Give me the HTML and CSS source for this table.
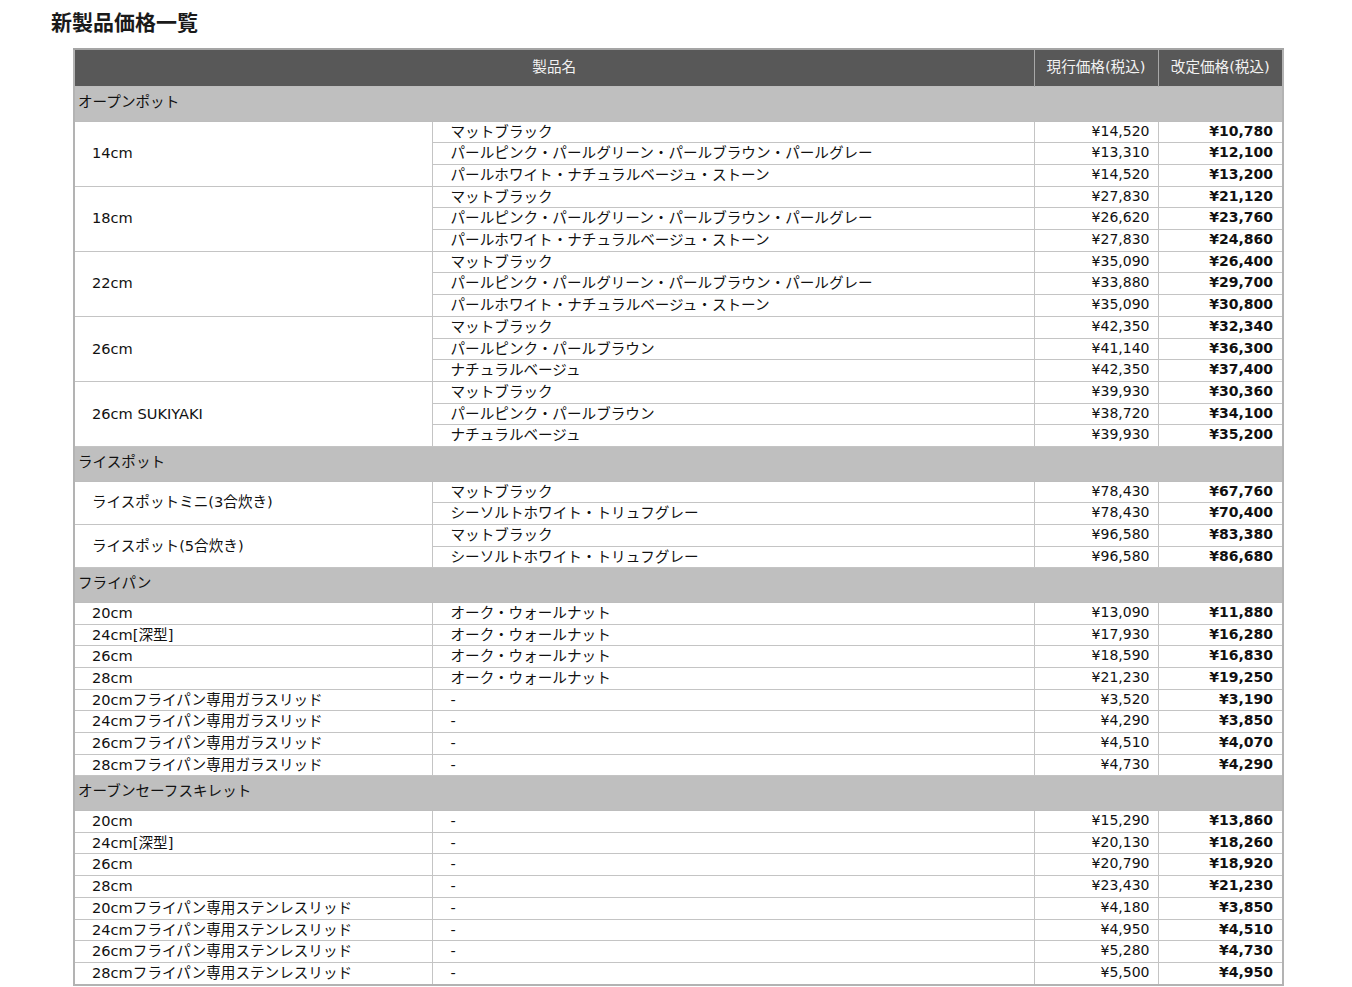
FILE: index.html
```html
<!DOCTYPE html>
<html lang="ja">
<head>
<meta charset="utf-8">
<title>新製品価格一覧</title>
<link rel="stylesheet" href="styles.css">
</head>
<body>
<div class="page">
<h1 class="title">新製品価格一覧</h1>
<table class="price-table">
<colgroup><col class="c-name"><col class="c-var"><col class="c-cur"><col class="c-new"></colgroup>
<thead>
<tr class="head"><th colspan="2">製品名</th><th>現行価格(税込)</th><th>改定価格(税込)</th></tr>
</thead>
<tbody>
<tr class="cat"><td colspan="4">オープンポット</td></tr>
<tr class="first"><td class="name" rowspan="3">14cm</td><td class="var">マットブラック</td><td class="cur">¥14,520</td><td class="new">¥10,780</td></tr>
<tr class="sub"><td class="var">パールピンク・パールグリーン・パールブラウン・パールグレー</td><td class="cur">¥13,310</td><td class="new">¥12,100</td></tr>
<tr class="sub"><td class="var">パールホワイト・ナチュラルベージュ・ストーン</td><td class="cur">¥14,520</td><td class="new">¥13,200</td></tr>
<tr class="first"><td class="name" rowspan="3">18cm</td><td class="var">マットブラック</td><td class="cur">¥27,830</td><td class="new">¥21,120</td></tr>
<tr class="sub"><td class="var">パールピンク・パールグリーン・パールブラウン・パールグレー</td><td class="cur">¥26,620</td><td class="new">¥23,760</td></tr>
<tr class="sub"><td class="var">パールホワイト・ナチュラルベージュ・ストーン</td><td class="cur">¥27,830</td><td class="new">¥24,860</td></tr>
<tr class="first"><td class="name" rowspan="3">22cm</td><td class="var">マットブラック</td><td class="cur">¥35,090</td><td class="new">¥26,400</td></tr>
<tr class="sub"><td class="var">パールピンク・パールグリーン・パールブラウン・パールグレー</td><td class="cur">¥33,880</td><td class="new">¥29,700</td></tr>
<tr class="sub"><td class="var">パールホワイト・ナチュラルベージュ・ストーン</td><td class="cur">¥35,090</td><td class="new">¥30,800</td></tr>
<tr class="first"><td class="name" rowspan="3">26cm</td><td class="var">マットブラック</td><td class="cur">¥42,350</td><td class="new">¥32,340</td></tr>
<tr class="sub"><td class="var">パールピンク・パールブラウン</td><td class="cur">¥41,140</td><td class="new">¥36,300</td></tr>
<tr class="sub"><td class="var">ナチュラルベージュ</td><td class="cur">¥42,350</td><td class="new">¥37,400</td></tr>
<tr class="first"><td class="name" rowspan="3">26cm SUKIYAKI</td><td class="var">マットブラック</td><td class="cur">¥39,930</td><td class="new">¥30,360</td></tr>
<tr class="sub"><td class="var">パールピンク・パールブラウン</td><td class="cur">¥38,720</td><td class="new">¥34,100</td></tr>
<tr class="sub"><td class="var">ナチュラルベージュ</td><td class="cur">¥39,930</td><td class="new">¥35,200</td></tr>

<tr class="cat"><td colspan="4">ライスポット</td></tr>
<tr class="first"><td class="name" rowspan="2">ライスポットミニ(3合炊き)</td><td class="var">マットブラック</td><td class="cur">¥78,430</td><td class="new">¥67,760</td></tr>
<tr class="sub"><td class="var">シーソルトホワイト・トリュフグレー</td><td class="cur">¥78,430</td><td class="new">¥70,400</td></tr>
<tr class="first"><td class="name" rowspan="2">ライスポット(5合炊き)</td><td class="var">マットブラック</td><td class="cur">¥96,580</td><td class="new">¥83,380</td></tr>
<tr class="sub"><td class="var">シーソルトホワイト・トリュフグレー</td><td class="cur">¥96,580</td><td class="new">¥86,680</td></tr>

<tr class="cat"><td colspan="4">フライパン</td></tr>
<tr class="row"><td class="name">20cm</td><td class="var">オーク・ウォールナット</td><td class="cur">¥13,090</td><td class="new">¥11,880</td></tr>
<tr class="row"><td class="name">24cm[深型]</td><td class="var">オーク・ウォールナット</td><td class="cur">¥17,930</td><td class="new">¥16,280</td></tr>
<tr class="row"><td class="name">26cm</td><td class="var">オーク・ウォールナット</td><td class="cur">¥18,590</td><td class="new">¥16,830</td></tr>
<tr class="row"><td class="name">28cm</td><td class="var">オーク・ウォールナット</td><td class="cur">¥21,230</td><td class="new">¥19,250</td></tr>
<tr class="row"><td class="name">20cmフライパン専用ガラスリッド</td><td class="var">-</td><td class="cur">¥3,520</td><td class="new">¥3,190</td></tr>
<tr class="row"><td class="name">24cmフライパン専用ガラスリッド</td><td class="var">-</td><td class="cur">¥4,290</td><td class="new">¥3,850</td></tr>
<tr class="row"><td class="name">26cmフライパン専用ガラスリッド</td><td class="var">-</td><td class="cur">¥4,510</td><td class="new">¥4,070</td></tr>
<tr class="row"><td class="name">28cmフライパン専用ガラスリッド</td><td class="var">-</td><td class="cur">¥4,730</td><td class="new">¥4,290</td></tr>

<tr class="cat"><td colspan="4">オーブンセーフスキレット</td></tr>
<tr class="row"><td class="name">20cm</td><td class="var">-</td><td class="cur">¥15,290</td><td class="new">¥13,860</td></tr>
<tr class="row"><td class="name">24cm[深型]</td><td class="var">-</td><td class="cur">¥20,130</td><td class="new">¥18,260</td></tr>
<tr class="row"><td class="name">26cm</td><td class="var">-</td><td class="cur">¥20,790</td><td class="new">¥18,920</td></tr>
<tr class="row"><td class="name">28cm</td><td class="var">-</td><td class="cur">¥23,430</td><td class="new">¥21,230</td></tr>
<tr class="row"><td class="name">20cmフライパン専用ステンレスリッド</td><td class="var">-</td><td class="cur">¥4,180</td><td class="new">¥3,850</td></tr>
<tr class="row"><td class="name">24cmフライパン専用ステンレスリッド</td><td class="var">-</td><td class="cur">¥4,950</td><td class="new">¥4,510</td></tr>
<tr class="row"><td class="name">26cmフライパン専用ステンレスリッド</td><td class="var">-</td><td class="cur">¥5,280</td><td class="new">¥4,730</td></tr>
<tr class="row"><td class="name">28cmフライパン専用ステンレスリッド</td><td class="var">-</td><td class="cur">¥5,500</td><td class="new">¥4,950</td></tr>
</tbody>
</table>
</div>
</body>
</html>
```
FILE: styles.css
```css
html, body {
  margin: 0;
  padding: 0;
  background: #ffffff;
}

.page {
  padding: 9px 0 0 51px;
  font-family: "DejaVu Sans", "Noto Sans CJK JP", sans-serif;
  color: #111111;
}

.title {
  margin: 0 0 14px 0;
  font-family: "Noto Sans CJK JP", sans-serif;
  font-size: 21px;
  line-height: 25px;
  font-weight: 700;
  color: #1a1a1a;
}

.price-table {
  margin-left: 22px;
  width: 1209px;
  border-collapse: collapse;
  border: 2px solid #b3b3b3;
  table-layout: fixed;
  font-size: 14.6px;
}

.c-name { width: 358px; }
.c-var { width: 602px; }
.c-cur { width: 124px; }
.c-new { width: 125px; }

.head th {
  background: #585858;
  color: #f2f2f2;
  font-weight: 400;
  line-height: 34px;
  padding: 0 0 2px 0;
  text-align: center;
  border-left: 1px solid #a8a8a8;
  border-right: 1px solid #a8a8a8;
  border-top: 2px solid #a5a5a5;
}

.cat td {
  background: #bfbfbf;
  line-height: 30.5px;
  padding: 0 0 3px 3px;
  border: 1px solid #bdbdbd;
}

td {
  padding: 0 0 1px 0;
  line-height: 19.7px;
  border: 1px solid #c4c4c4;
  white-space: nowrap;
}

.name {
  padding-left: 17px;
  vertical-align: middle;
}

.var {
  padding-left: 18px;
}

.cur {
  text-align: right;
  padding-right: 8px;
  font-size: 14px;
}

.new {
  text-align: right;
  padding-right: 9px;
  font-size: 14px;
  font-weight: 700;
}

.sub td {
  border-top: 1px solid #858585;
}
```
